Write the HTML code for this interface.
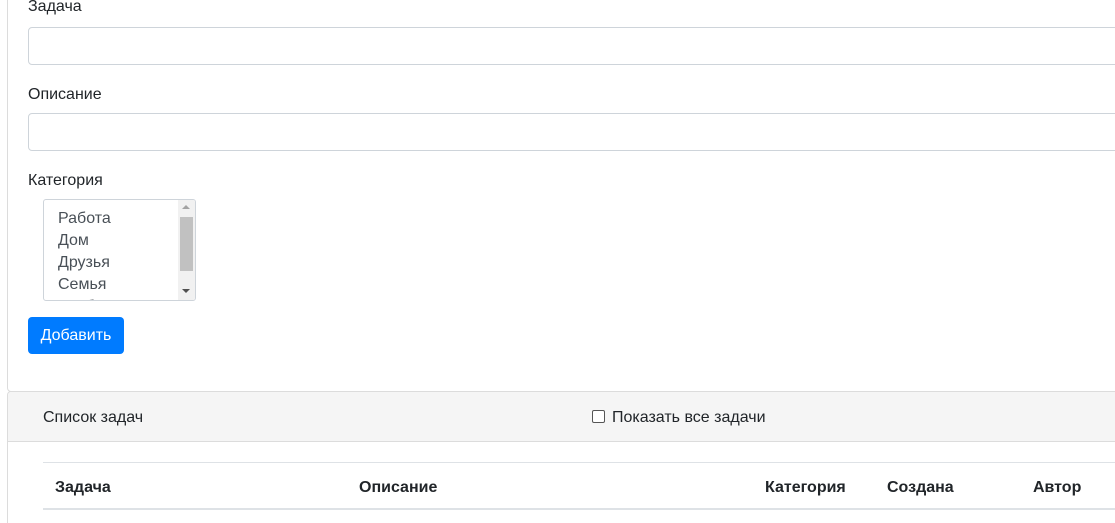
<!DOCTYPE html>
<html style="width:1115px;height:523px;overflow:hidden"><head><meta charset="utf-8"><style>
body{margin:0;width:1115px;height:523px;overflow:hidden;background:#fff;font-family:"Liberation Sans","DejaVu Sans",sans-serif;font-size:16px;color:#212529;position:relative}
.a{position:absolute}
.card1{left:7px;top:-5px;width:1120px;height:395px;border:1px solid #dcdcdc;border-radius:4px}
.card2{left:7px;top:391px;width:1120px;height:132px;border:1px solid #dcdcdc;border-bottom:none;border-radius:4px 4px 0 0;overflow:hidden}
.hdr{left:0;top:0;width:100%;height:49px;background:#f5f5f5;border-bottom:1px solid #dcdcdc}
.inp{left:28px;width:1100px;height:36px;border:1px solid #ced4da;border-radius:4px}
.sel{left:43px;top:199px;width:151px;height:100px;border:1px solid #ced4da;border-radius:3px;overflow:hidden;color:#495057}
.btn{left:28px;top:317px;width:96px;height:37px;background:#007bff;border-radius:4px;color:#fff;text-align:center;line-height:37px}
</style></head><body>
<div class="a card1"></div>
<div class="a" style="left:28px;top:-2px">Задача</div>
<div class="a inp" style="top:27px"></div>
<div class="a" style="left:28px;top:86px">Описание</div>
<div class="a inp" style="top:113px"></div>
<div class="a" style="left:28px;top:172px">Категория</div>
<div class="a sel">
 <div class="a" style="left:14px;top:8px;line-height:22px">Работа<br>Дом<br>Друзья<br>Семья<br>Учёба</div>
 <div class="a" style="right:0;top:0;width:17px;height:100px;background:#f1f1f1"></div>
 <div class="a" style="right:2px;top:17px;width:13px;height:54px;background:#c1c1c1"></div>
 <div class="a" style="right:5px;top:5px;width:0;height:0;border-left:4px solid transparent;border-right:4px solid transparent;border-bottom:4px solid #a3a3a3"></div>
 <div class="a" style="right:5px;bottom:7px;width:0;height:0;border-left:4px solid transparent;border-right:4px solid transparent;border-top:4px solid #505050"></div>
</div>
<div class="a btn">Добавить</div>
<div class="a card2"><div class="a hdr"></div></div>
<div class="a" style="left:43px;top:409px">Список задач</div>
<div class="a" style="left:592px;top:410px;width:11px;height:11px;border:1px solid #555;border-radius:2px;background:#fff"></div>
<div class="a" style="left:612px;top:409px">Показать все задачи</div>
<div class="a" style="left:43px;top:462px;width:1072px;border-top:1px solid #dee2e6"></div>
<div class="a" style="left:43px;top:508px;width:1072px;border-top:2px solid #dee2e6"></div>
<div class="a" style="left:55px;top:479px;font-weight:bold">Задача</div>
<div class="a" style="left:359px;top:479px;font-weight:bold">Описание</div>
<div class="a" style="left:765px;top:479px;font-weight:bold">Категория</div>
<div class="a" style="left:887px;top:479px;font-weight:bold">Создана</div>
<div class="a" style="left:1033px;top:479px;font-weight:bold">Автор</div>
</body></html>
